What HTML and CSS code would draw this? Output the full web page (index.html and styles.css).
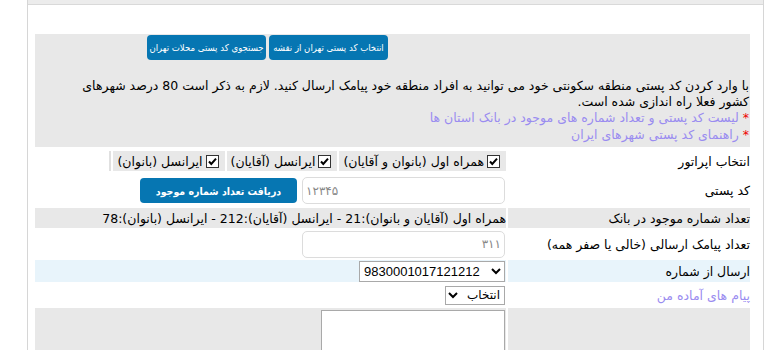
FILE: index.html
```html
<!DOCTYPE html>
<html lang="fa" dir="rtl">
<head>
    <meta charset="UTF-8">
    <meta name="viewport" content="width=device-width, initial-scale=1.0">
    <title>ارسال پیامک بر اساس کد پستی</title>
    <link rel="stylesheet" href="styles.css">
</head>
<body>
    <div class="frame">
        <div class="topbar"></div>
        <div class="content">
            <table class="form">
                <colgroup>
                    <col class="col-label">
                    <col class="col-value">
                </colgroup>
                <tr class="intro">
                    <td colspan="2">
                        <div class="tools">
                            <a class="btn" href="#">انتخاب کد پستی تهران از نقشه</a>
                            <a class="btn" href="#">جستجوی کد پستی محلات تهران</a>
                        </div>
                        <p class="desc">با وارد کردن کد پستی منطقه سکونتی خود می توانید به افراد منطقه خود پیامک ارسال کنید. لازم به ذکر است 80 درصد شهرهای کشور فعلا راه اندازی شده است.</p>
                        <div class="links">
                            <div><span class="star">*</span> <a href="#">لیست کد پستی و تعداد شماره های موجود در بانک استان ها</a></div>
                            <div><span class="star">*</span> <a href="#">راهنمای کد پستی شهرهای ایران</a></div>
                        </div>
                    </td>
                </tr>
                <tr class="row-operator">
                    <td class="label">انتخاب اپراتور</td>
                    <td class="value">
                        <div class="operators">
                            <label class="op"><span class="cb"><svg viewBox="0 0 13 13" width="13" height="13"><rect x="0.5" y="0.5" width="12" height="12" fill="#fff" stroke="#333"/><path d="M3 6.5 L5.3 9 L10 3.6" fill="none" stroke="#000" stroke-width="2"/></svg></span>همراه اول (بانوان و آقایان)</label>
                            <label class="op"><span class="cb"><svg viewBox="0 0 13 13" width="13" height="13"><rect x="0.5" y="0.5" width="12" height="12" fill="#fff" stroke="#333"/><path d="M3 6.5 L5.3 9 L10 3.6" fill="none" stroke="#000" stroke-width="2"/></svg></span>ایرانسل (آقایان)</label>
                            <label class="op"><span class="cb"><svg viewBox="0 0 13 13" width="13" height="13"><rect x="0.5" y="0.5" width="12" height="12" fill="#fff" stroke="#333"/><path d="M3 6.5 L5.3 9 L10 3.6" fill="none" stroke="#000" stroke-width="2"/></svg></span>ایرانسل (بانوان)</label>
                            <span class="op-edge"></span>
                        </div>
                    </td>
                </tr>
                <tr class="row-postal">
                    <td class="label">کد پستی</td>
                    <td class="value">
                        <div class="inline">
                            <input class="field ltr" type="text" placeholder="۱۲۳۴۵">
                            <a class="btn btn-bold" href="#">دریافت تعداد شماره موجود</a>
                        </div>
                    </td>
                </tr>
                <tr class="row-bank">
                    <td class="label">تعداد شماره موجود در بانک</td>
                    <td class="value">همراه اول (آقایان و بانوان):21 - ایرانسل (آقایان):212 - ایرانسل (بانوان):78</td>
                </tr>
                <tr class="row-count">
                    <td class="label">تعداد پیامک ارسالی (خالی یا صفر همه)</td>
                    <td class="value"><input class="field" type="text" placeholder="۳۱۱"></td>
                </tr>
                <tr class="row-from">
                    <td class="label">ارسال از شماره</td>
                    <td class="value">
                        <select class="sel sel-number">
                            <option>9830001017121212</option>
                        </select>
                    </td>
                </tr>
                <tr class="row-ready">
                    <td class="label"><a href="#">پیام های آماده من</a></td>
                    <td class="value">
                        <select class="sel sel-ready">
                            <option>انتخاب</option>
                        </select>
                    </td>
                </tr>
                <tr class="row-text">
                    <td class="label"></td>
                    <td class="value"><textarea class="message"></textarea></td>
                </tr>
            </table>
        </div>
    </div>
</body>
</html>
```

FILE: styles.css
```css
body {
    margin: 0;
    background: #fff;
    color: #000;
    font-family: "DejaVu Sans", sans-serif;
    font-size: 12.5px;
}
.frame {
    margin: 0 auto 0 27px;
    width: 735px;
    height: 350px;
    border-left: 1px solid #d6d6d6;
    border-right: 1px solid #d6d6d6;
    overflow: hidden;
}
.topbar {
    height: 4px;
    background: #ececec;
    border-bottom: 1px solid #d9d9d9;
}
.content {
    padding: 27px 11px 0 5px;
}
.form {
    width: 719px;
    table-layout: fixed;
    border-spacing: 2px;
}
.col-label {
    width: 242px;
}
.form td {
    padding: 0;
    vertical-align: middle;
}
a {
    color: #9a8cf0;
    text-decoration: none;
}
.intro td {
    background: #e8e8e8;
    height: 113px;
    vertical-align: top;
}
.tools {
    display: flex;
    justify-content: center;
    gap: 3px;
    margin: 1px 250px 0 0;
}
.btn {
    display: inline-flex;
    align-items: center;
    justify-content: center;
    box-sizing: border-box;
    height: 25px;
    padding: 0 4px;
    background: #0676b2;
    color: #fff;
    border-radius: 4px;
    font-family: "DejaVu Sans Condensed", "DejaVu Sans", sans-serif;
    font-stretch: condensed;
    font-size: 9.5px;
    white-space: nowrap;
}
.tools .btn {
    width: 119px;
}
.btn-bold {
    width: 157px;
    font-weight: bold;
    font-size: 10.5px;
}
.desc {
    margin: 18px 1px 0 0;
    padding-left: 30px;
    line-height: 16px;
}
.links {
    line-height: 16.5px;
    margin-right: 1px;
}
.star {
    color: #e00;
}
.label {
    text-align: right;
}
.value {
    text-align: right;
}
.row-operator td {
    height: 24px;
}
.operators {
    display: flex;
    gap: 2px;
    align-items: stretch;
}
.op {
    display: flex;
    align-items: center;
    gap: 3px;
    height: 20px;
    padding: 0 6px 0 4px;
    background: #e8e8e8;
}
.cb {
    display: inline-flex;
}
.op-edge {
    width: 2px;
    background: #e0e0e0;
}
.row-postal td {
    height: 31px;
}
.inline {
    display: flex;
    align-items: center;
    gap: 5px;
}
.field {
    box-sizing: border-box;
    width: 203px;
    height: 27px;
    margin: 0 1px 0 0;
    padding: 0 3px;
    border: 1px solid #dcdcdc;
    border-radius: 5px;
    font-family: inherit;
    font-size: 12px;
    background: #fff;
}
.field::placeholder {
    color: #888;
}
.ltr {
    direction: ltr;
    text-align: left;
}
.row-bank td {
    height: 20px;
    background: #e8e8e8;
}
.row-count td {
    height: 28px;
}
.row-from td {
    height: 22px;
    background: #e8f4fb;
}
.sel {
    box-sizing: border-box;
    margin-right: 1px;
    border: 1px solid #a9a9a9;
    background: #fff;
    font-family: "Liberation Sans", sans-serif;
    font-size: 13px;
    color: #000;
}
.sel-number {
    width: 146px;
    height: 21px;
    direction: ltr;
}
.sel-ready {
    width: 60px;
    height: 19px;
    padding: 0;
    font-family: "DejaVu Sans", sans-serif;
    font-size: 12px;
}
.row-ready td {
    height: 22px;
}
.row-text td {
    height: 60px;
    background: #e8e8e8;
    vertical-align: top;
}
.message {
    box-sizing: border-box;
    display: block;
    width: 184px;
    height: 60px;
    margin: 2px 1px 0 0;
    border: 1px solid #a9a9a9;
    resize: none;
}
```
